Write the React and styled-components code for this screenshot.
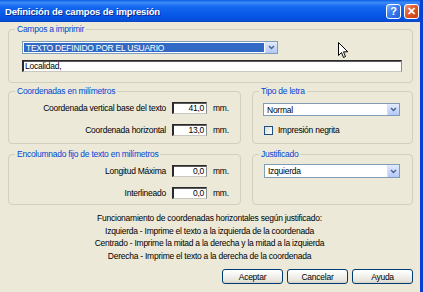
import React from 'react'
import styled, { createGlobalStyle } from 'styled-components'

const GlobalStyle = createGlobalStyle`
  html, body {
    margin: 0;
    padding: 0;
    background: #ece9d8;
  }
  body {
    font-family: "Liberation Sans", Arial, sans-serif;
    font-size: 8.5px;
    letter-spacing: -0.25px;
    color: #000;
  }
`

const Window = styled.div`
  position: relative;
  width: 423px;
  height: 292px;
  box-sizing: border-box;
  border-right: 3px solid #0a3fd0;
  background: #ece9d8;
  display: flex;
  flex-direction: column;
  overflow: hidden;
`

const TitleBar = styled.div`
  height: 22px;
  flex: none;
  display: flex;
  align-items: center;
  justify-content: space-between;
  padding: 0 1px 0 5px;
  background: linear-gradient(to bottom, #0b60e6 0%, #3d8af7 12%, #1568f0 30%, #0756e6 70%, #0550dc 90%, #0a46c4 100%);
`

const Title = styled.span`
  color: #fff;
  font-weight: bold;
  font-size: 9.5px;
  letter-spacing: -0.15px;
  text-shadow: 1px 1px 0 #0c2b8c;
`

const TitleButtons = styled.div`
  display: flex;
  gap: 3px;
`

const TitleButton = styled.div`
  width: 15px;
  height: 15px;
  box-sizing: border-box;
  border: 1px solid #fff;
  border-radius: 3px;
  display: flex;
  align-items: center;
  justify-content: center;
  color: #fff;
  font-weight: bold;
  font-size: 11px;
  letter-spacing: 0;
  background: ${p => p.$close
    ? 'linear-gradient(135deg, #f0a080 0%, #e05a30 40%, #c83c14 100%)'
    : 'linear-gradient(135deg, #8cb4ff 0%, #3a80f4 40%, #2360d8 100%)'};
`

const Content = styled.div`
  flex: 1;
  display: flex;
  flex-direction: column;
  padding: 2px 7px 0 8px;
`

const Groups = styled.div`
  display: grid;
  grid-template-columns: 233px 161px;
  column-gap: 11px;
  row-gap: 2px;
`

const Group = styled.fieldset`
  margin: 0;
  padding: 0;
  min-width: 0;
  border: 1px solid #d0d0bf;
  border-radius: 4px;
  grid-column: ${p => (p.$wide ? '1 / span 2' : 'auto')};
  margin-top: ${p => p.$top || 0}px;
  display: flex;
  flex-direction: column;
`

const Legend = styled.legend`
  color: #0046d5;
  line-height: 11px;
  padding: 0 2px;
  margin-left: 6px;
`

const Body = styled.div`
  flex: 1;
  display: flex;
  flex-direction: column;
  gap: ${p => p.$gap}px;
  padding: ${p => p.$pad};
`

const Combo = styled.div`
  display: flex;
  width: ${p => p.$w}px;
  height: ${p => p.$h}px;
  box-sizing: border-box;
  border: 1px solid #7f9db9;
  background: #fff;
`

const ComboValue = styled.div`
  flex: 1;
  display: flex;
  align-items: center;
  margin: 1px;
  padding: 0 2px;
  background: ${p => (p.$selected ? '#316ac5' : 'transparent')};
  color: ${p => (p.$selected ? '#fff' : '#000')};
`

const ComboArrow = styled.div`
  width: 11px;
  display: flex;
  align-items: center;
  justify-content: center;
  background: linear-gradient(to bottom, #e4ecfd 0%, #c5d6fb 60%, #b3c8f6 100%);
  border-left: 1px solid #d5e0fb;
`

const TextBox = styled.div`
  height: ${p => p.$h || 12}px;
  box-sizing: border-box;
  border-style: solid;
  border-width: 1px 1px 1px 2px;
  border-color: #2a2a2a #8a8a8a #c8c8c0 #2a2a2a;
  box-shadow: inset 0 1px 0 #5a5a5a;
  background: #fff;
  display: flex;
  align-items: center;
  justify-content: ${p => (p.$right ? 'flex-end' : 'flex-start')};
  padding: 0 2px 0 1px;
`

const FieldRow = styled.div`
  display: grid;
  grid-template-columns: 157px 35px auto;
  column-gap: 6px;
  align-items: center;
`

const FieldLabel = styled.span`
  text-align: right;
`

const CheckRow = styled.label`
  display: flex;
  align-items: center;
  gap: 5px;
  padding-left: 1px;
`

const CheckBox = styled.span`
  width: 9px;
  height: 9px;
  box-sizing: border-box;
  border: 1px solid #1c5180;
  background: linear-gradient(135deg, #dcdcd7 0%, #fff 100%);
`

const Notes = styled.div`
  margin-top: 7px;
  text-align: center;
  line-height: 12.5px;
  padding-right: 2px;
`

const Buttons = styled.div`
  margin-top: 7px;
  display: flex;
  justify-content: flex-end;
  gap: 4px;
`

const Button = styled.div`
  width: 61px;
  height: 15px;
  box-sizing: border-box;
  border: 1px solid #003c74;
  border-radius: 3px;
  background: linear-gradient(to bottom, #ffffff 0%, #f4f4f0 40%, #e6e3da 85%, #d6d0c5 100%);
  display: flex;
  align-items: center;
  justify-content: center;
`

const Cursor = styled.svg`
  position: absolute;
  left: 338px;
  top: 42px;
`

function Chevron() {
  return (
    <svg width="7" height="5" viewBox="0 0 7 5">
      <path d="M1 1 L3.5 3.5 L6 1" fill="none" stroke="#4d6185" strokeWidth="1.4" />
    </svg>
  )
}

function ComboBox({ w, h, value, selected }) {
  return (
    <Combo $w={w} $h={h}>
      <ComboValue $selected={selected}>{value}</ComboValue>
      <ComboArrow>
        <Chevron />
      </ComboArrow>
    </Combo>
  )
}

function Field({ label, value }) {
  return (
    <FieldRow>
      <FieldLabel>{label}</FieldLabel>
      <TextBox $right>{value}</TextBox>
      <span>mm.</span>
    </FieldRow>
  )
}

export default function App() {
  return (
    <>
      <GlobalStyle />
      <Window>
        <TitleBar>
          <Title>Definición de campos de impresión</Title>
          <TitleButtons>
            <TitleButton>?</TitleButton>
            <TitleButton $close>✕</TitleButton>
          </TitleButtons>
        </TitleBar>

        <Content>
          <Groups>
            <Group $wide>
              <Legend>Campos a imprimir</Legend>
              <Body $pad="6px 10px 10px 13px" $gap={6}>
                <ComboBox w={256} h={13} value="TEXTO DEFINIDO POR EL USUARIO" selected />
                <TextBox>Localidad,</TextBox>
              </Body>
            </Group>

            <Group $top={1}>
              <Legend>Coordenadas en milímetros</Legend>
              <Body $pad="5px 0 7px 0" $gap={10}>
                <Field label="Coordenada vertical base del texto" value="41,0" />
                <Field label="Coordenada horizontal" value="13,0" />
              </Body>
            </Group>

            <Group $top={1}>
              <Legend>Tipo de letra</Legend>
              <Body $pad="6px 0 0 10px" $gap={9}>
                <ComboBox w={137} h={13} value="Normal" />
                <CheckRow>
                  <CheckBox />
                  Impresión negrita
                </CheckRow>
              </Body>
            </Group>

            <Group $top={3}>
              <Legend>Encolumnado fijo de texto en milímetros</Legend>
              <Body $pad="5px 0 5px 0" $gap={10}>
                <Field label="Longitud Máxima" value="0,0" />
                <Field label="Interlineado" value="0,0" />
              </Body>
            </Group>

            <Group $top={3}>
              <Legend>Justificado</Legend>
              <Body $pad="4px 0 0 11px" $gap={0}>
                <ComboBox w={136} h={14} value="Izquierda" />
              </Body>
            </Group>
          </Groups>

          <Notes>
            Funcionamiento de coordenadas horizontales según justificado:<br />
            Izquierda - Imprime el texto a la izquierda de la coordenada<br />
            Centrado - Imprime la mitad a la derecha y la mitad a la izquierda<br />
            Derecha - Imprime el texto a la derecha de la coordenada
          </Notes>

          <Buttons>
            <Button>Aceptar</Button>
            <Button>Cancelar</Button>
            <Button>Ayuda</Button>
          </Buttons>
        </Content>

        <Cursor width="11" height="17" viewBox="0 0 11 17">
          <path d="M0.5 0.5 L0.5 13.5 L3.5 10.5 L5.5 15.5 L7.5 14.5 L5.5 9.8 L9.8 9.8 Z" fill="#fff" stroke="#000" strokeWidth="1" />
        </Cursor>
      </Window>
    </>
  )
}
